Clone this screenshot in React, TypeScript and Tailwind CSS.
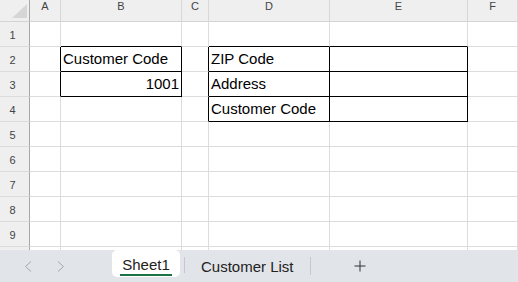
import React from "react";

const COLS = ["A", "B", "C", "D", "E", "F"];
const ROWS = [1, 2, 3, 4, 5, 6, 7, 8, 9, 10];

const RIGHT_BLACK = new Set(["A2", "A3", "B2", "B3", "C2", "C3", "C4", "D2", "D3", "D4", "E2", "E3", "E4"]);
const BOTTOM_BLACK = new Set(["B1", "B2", "B3", "D1", "E1", "D2", "E2", "D3", "E3", "D4", "E4"]);

const DATA: Record<string, { text: string; right?: boolean }> = {
  B2: { text: "Customer Code" },
  B3: { text: "1001", right: true },
  D2: { text: "ZIP Code" },
  D3: { text: "Address" },
  D4: { text: "Customer Code" },
};

function Cell({ id }: { id: string }) {
  const rb = RIGHT_BLACK.has(id);
  const bb = BOTTOM_BLACK.has(id);
  const d = DATA[id];
  return (
    <div
      className={
        "flex items-center border-r border-b whitespace-nowrap overflow-hidden text-[15px] leading-[24px] text-black " +
        (rb ? "border-r-black " : "border-r-[#dcdcdc] ") +
        (bb ? "border-b-black " : "border-b-[#dcdcdc] ") +
        (d && d.right ? "justify-end pr-[2px]" : "pl-[2px]")
      }
    >
      {d ? d.text : null}
    </div>
  );
}

export default function App() {
  return (
    <div
      className="w-[518px] h-[282px] overflow-hidden bg-white flex flex-col"
      style={{ fontFamily: '"Liberation Sans", Arial, sans-serif' }}
    >
      <div className="h-[250px] overflow-hidden shrink-0">
        <div className="grid grid-cols-[30px_31px_121px_27px_121px_138px_1fr] grid-rows-[22px_repeat(10,25px)]">
          {/* corner */}
          <div className="bg-[#efefef] border-r border-b border-r-[#a8a8a8] border-b-[#d4d4d4] flex justify-end items-end pr-[2px] pb-[3px]">
            <svg width="15" height="14" viewBox="0 0 15 14">
              <polygon points="15,0 15,14 0,14" fill="#d6d6d6" />
            </svg>
          </div>
          {COLS.map((c) => (
            <div
              key={c}
              className="bg-[#efefef] border-r border-b border-r-[#d8d8d8] border-b-[#d4d4d4] flex justify-center items-start text-[11px] leading-[13px] text-[#444]"
            >
              {c}
            </div>
          ))}
          {ROWS.map((r) => (
            <React.Fragment key={r}>
              <div className="bg-[#efefef] border-r border-b border-r-[#a8a8a8] border-b-[#dcdcdc] flex justify-center items-center pr-[4px] pt-[2px] text-[11px] leading-[13px] text-[#444]">
                {r < 10 ? r : null}
              </div>
              {COLS.map((c) => (
                <Cell key={c + r} id={c + r} />
              ))}
            </React.Fragment>
          ))}
        </div>
      </div>
      <div className="h-[32px] bg-[#e1e4e8] flex items-start">
        <div className="w-[112px] h-[32px] flex items-start">
          <svg className="ml-[24px] mt-[11px]" width="8" height="11" viewBox="0 0 8 11">
            <polyline points="7,0.5 1.5,5.5 7,10.5" fill="none" stroke="#a3a7ab" strokeWidth="1" />
          </svg>
          <svg className="ml-[25px] mt-[11px]" width="8" height="11" viewBox="0 0 8 11">
            <polyline points="1,0.5 6.5,5.5 1,10.5" fill="none" stroke="#a3a7ab" strokeWidth="1" />
          </svg>
        </div>
        <div className="w-[68px] h-[27px] bg-white rounded-[5px] flex flex-col items-center pt-[6px]">
          <span className="text-[15px] leading-[17px] text-[#222]">Sheet1</span>
          <div className="mt-[1px] w-[52px] h-[2px] bg-[#1b7343]" />
        </div>
        <div className="ml-[4px] mt-[7px] w-px h-[16px] bg-[#c5c9cd]" />
        <span className="ml-[16px] mt-[8px] text-[15px] leading-[17px] text-[#222] whitespace-nowrap">Customer List</span>
        <div className="ml-[16px] mt-[7px] w-px h-[18px] bg-[#c5c9cd]" />
        <svg className="ml-[43px] mt-[10px]" width="12" height="12" viewBox="0 0 12 12">
          <line x1="6" y1="0.5" x2="6" y2="11.5" stroke="#333" strokeWidth="1" />
          <line x1="0.5" y1="6" x2="11.5" y2="6" stroke="#333" strokeWidth="1" />
        </svg>
      </div>
    </div>
  );
}
